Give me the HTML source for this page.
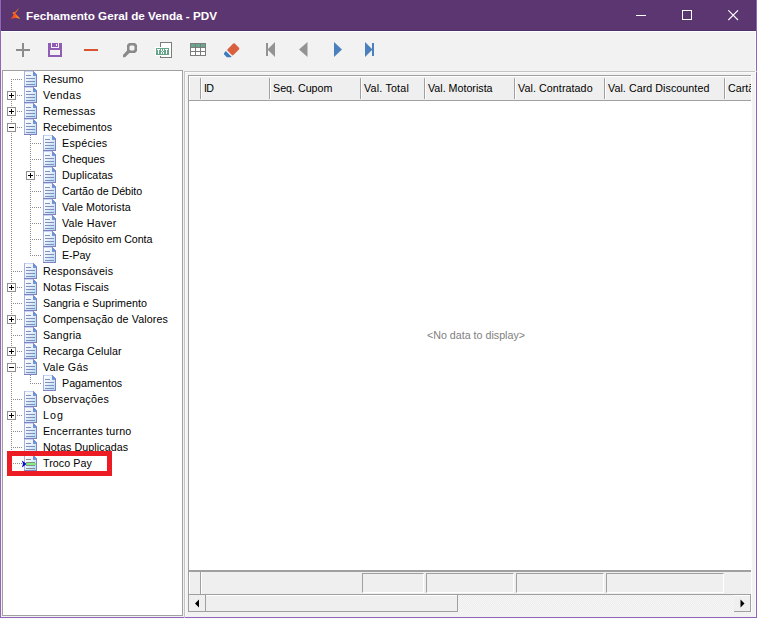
<!DOCTYPE html>
<html><head><meta charset="utf-8">
<style>
html,body{margin:0;padding:0;}
body{width:757px;height:619px;overflow:hidden;position:relative;background:#f2f2f2;font-family:"Liberation Sans",sans-serif;}
.a{position:absolute;}
.t{position:absolute;font-size:10.7px;line-height:16px;color:#000;white-space:nowrap;}
.tree{position:absolute;left:3px;top:71px;}
.h{position:absolute;top:77px;font-size:10.7px;line-height:23px;color:#000;white-space:nowrap;}
.sep{position:absolute;top:78px;width:1px;height:21px;background:#a0a0a0;border-right:1px solid #fff;}
</style></head><body>
<!-- window frame -->
<div class="a" style="left:0;top:0;width:757px;height:31px;background:#5c3671;"></div>
<div class="a" style="left:1px;top:30px;width:755px;height:1px;background:#52306a;"></div>
<div class="a" style="left:755px;top:0;width:1px;height:31px;background:#56336e;"></div>
<div class="a" style="left:1px;top:0;width:1px;height:31px;background:#56336e;"></div>
<div class="a" style="left:1px;top:31px;width:755px;height:1px;background:#ffffff;"></div>
<div class="a" style="left:0;top:0;width:1px;height:618px;background:#9264ba;"></div>
<div class="a" style="left:756px;top:0;width:1px;height:618px;background:#9264ba;"></div>
<div class="a" style="left:0;top:617px;width:757px;height:1px;background:#9264ba;"></div>
<div class="a" style="left:0;top:618px;width:757px;height:1px;background:#fafafa;"></div>

<!-- title -->
<svg class="a" style="left:0;top:0" width="24" height="24" viewBox="0 0 24 24">
 <defs><linearGradient id="ig" x1="11" y1="0" x2="20" y2="0" gradientUnits="userSpaceOnUse"><stop offset="0" stop-color="#ee3e26"/><stop offset="0.45" stop-color="#f25a22"/><stop offset="1" stop-color="#f9b51c"/></linearGradient></defs>
 <path d="M19 8L15.4 13.6L20.2 18.8L15.6 17.8L10.8 19L13.6 14.4L12.4 12.7L14.6 12.3Z" fill="url(#ig)"/>
 <path d="M12.4 12.7L14.6 12.3L14 13.8Z" fill="#f7b01e"/>
</svg>
<div class="a" style="left:26px;top:8px;font-size:11.7px;font-weight:bold;color:#fff;line-height:16px;white-space:nowrap;">Fechamento Geral de Venda - PDV</div>
<div class="a" style="left:636px;top:15px;width:10px;height:1px;background:#fff;"></div>
<div class="a" style="left:682px;top:10px;width:8px;height:8px;border:1px solid #fff;"></div>
<svg class="a" style="left:728px;top:10px" width="11" height="11" viewBox="0 0 11 11"><path d="M0.3 0.3L10 10M10 0.3L0.3 10" stroke="#fff" stroke-width="1.1"/></svg>

<!-- toolbar -->
<svg class="a" style="left:0;top:32px" width="400" height="36" viewBox="0 32 400 36" shape-rendering="crispEdges">
 <!-- plus -->
 <rect x="16" y="49" width="14" height="2" fill="#8c8c8c"/>
 <rect x="22" y="43" width="2" height="14" fill="#8c8c8c"/>
 <!-- save -->
 <path d="M48 43H62V57H48Z M51 43V48H59V43H58V47H52V43Z M50 50V55H60V50Z M56 44V46H57V44Z" fill="#8f5eb4" fill-rule="evenodd"/>
 <!-- minus -->
 <rect x="84" y="49" width="14" height="2" fill="#d9532e"/>
 <!-- magnifier -->
 <path d="M129 43H135L137 45V51L135 53H129L127 51V45Z M130.5 45.5H133.5L134.5 46.5V49.5L133.5 50.5H130.5L129.5 49.5V46.5Z" fill="#8a8a8a" fill-rule="evenodd" shape-rendering="auto"/>
 <path d="M127.5 50L130 52.5L125 57.2H123V55Z" fill="#8a8a8a" shape-rendering="auto"/>
 <!-- txt -->
 <rect x="160.5" y="42.5" width="11" height="15" fill="#fff" stroke="#7c7c7c"/>
 <rect x="155" y="47" width="15" height="9" fill="#fff"/>
 <rect x="156" y="48" width="13" height="7" fill="#66a58a"/>
 <g fill="#fff">
  <rect x="157" y="49" width="3" height="1"/><rect x="158" y="50" width="1" height="4"/>
  <rect x="161" y="49" width="1" height="2"/><rect x="163" y="49" width="1" height="2"/><rect x="162" y="51" width="1" height="1"/><rect x="161" y="52" width="1" height="2"/><rect x="163" y="52" width="1" height="2"/>
  <rect x="165" y="49" width="3" height="1"/><rect x="166" y="50" width="1" height="4"/>
 </g>
 <!-- grid -->
 <rect x="190" y="43" width="16" height="13" fill="#7c7c7c"/>
 <g fill="#68a88c"><rect x="191" y="44" width="4" height="3"/><rect x="196" y="44" width="4" height="3"/><rect x="201" y="44" width="4" height="3"/></g>
 <g fill="#fff"><rect x="191" y="48" width="4" height="3"/><rect x="196" y="48" width="4" height="3"/><rect x="201" y="48" width="4" height="3"/>
 <rect x="191" y="52" width="4" height="3"/><rect x="196" y="52" width="4" height="3"/><rect x="201" y="52" width="4" height="3"/></g>
 <!-- eraser -->
 <g shape-rendering="auto">
 <path d="M233.2 43.6Q234 42.8 234.8 43.6L239 47.8Q239.8 48.6 239 49.4L233.4 55Q232.6 55.8 231.8 55L227.6 50.8Q226.8 50 227.6 49.2Z" fill="#d95f3e"/>
 <path d="M225.8 51L231.6 56.8L231 57.2H226.8L224.2 54.6Q223.8 54 224 53.2Z" fill="#3d7bc0"/>
 </g>
 <!-- nav -->
 <g shape-rendering="auto">
 <rect x="266" y="43" width="2" height="13" fill="#939393"/>
 <path d="M267.5 49.5L275 42V57Z" fill="#939393"/>
 <path d="M299 49.5L307.5 42V57Z" fill="#939393"/>
 <path d="M342 49.5L334 42V57Z" fill="#4a80bd"/>
 <path d="M372.5 49.5L365 42V57Z" fill="#4a80bd"/>
 <rect x="372" y="43" width="2" height="13" fill="#4a80bd"/>
 </g>
</svg>

<!-- tree panel -->
<div class="a" style="left:2px;top:70px;width:179px;height:544px;border:1px solid #a0a0a0;background:#fff;"></div>
<svg class="tree" width="179" height="544" viewBox="3 71 179 544" shape-rendering="crispEdges"><defs>
<linearGradient id="dg" x1="0" y1="0" x2="1" y2="1"><stop offset="0" stop-color="#ffffff"/><stop offset="0.4" stop-color="#e8f4fc"/><stop offset="1" stop-color="#a6daf6"/></linearGradient>
<g id="docbase">
  <path d="M1 1H9V5H12V15H1Z" fill="url(#dg)"/>
  <rect x="0" y="0" width="1" height="16" fill="#a2b2e2"/>
  <rect x="1" y="0" width="8" height="1" fill="#c8d4f4"/>
  <rect x="9" y="0" width="1" height="5" fill="#8486c4"/>
  <rect x="9" y="4" width="4" height="1" fill="#8c96cc"/>
  <path d="M9 0L13 4V5H12L9 1Z" fill="#8a8cc8"/>
  <path d="M10 1.2L12 3.4V4H10Z" fill="#4aa0ee"/>
  <rect x="12" y="4" width="1" height="12" fill="#8080c0"/>
  <rect x="0" y="15" width="13" height="1" fill="#8080c0"/>
</g>
<symbol id="doc" viewBox="0 0 13 16">
  <use href="#docbase"/>
  <rect x="2" y="4" width="5" height="1" fill="#8a8abc"/>
  <rect x="2" y="7" width="9" height="1" fill="#8a8abc"/>
  <rect x="2" y="10" width="9" height="1" fill="#8a8abc"/>
  <rect x="2" y="13" width="9" height="1" fill="#8a8abc"/>
</symbol>
<symbol id="doc2" viewBox="0 0 13 16">
  <use href="#docbase"/>
  <rect x="2" y="4" width="5" height="1" fill="#8c8c8c"/>
  <rect x="2" y="7" width="9" height="1" fill="#8c8c8c"/>
  <rect x="2" y="8" width="10" height="2" fill="#7ef07e"/>
  <rect x="2" y="10" width="9" height="1" fill="#8c8c8c"/>
  <rect x="2" y="13" width="9" height="1" fill="#8c8c8c"/>
</symbol>
</defs><g fill="#8c8c8c"><rect x="11" y="79" width="1" height="1"/><rect x="13" y="79" width="1" height="1"/><rect x="15" y="79" width="1" height="1"/><rect x="17" y="79" width="1" height="1"/><rect x="19" y="79" width="1" height="1"/><rect x="21" y="79" width="1" height="1"/><rect x="17" y="95" width="1" height="1"/><rect x="19" y="95" width="1" height="1"/><rect x="21" y="95" width="1" height="1"/><rect x="17" y="111" width="1" height="1"/><rect x="19" y="111" width="1" height="1"/><rect x="21" y="111" width="1" height="1"/><rect x="17" y="127" width="1" height="1"/><rect x="19" y="127" width="1" height="1"/><rect x="21" y="127" width="1" height="1"/><rect x="30" y="143" width="1" height="1"/><rect x="32" y="143" width="1" height="1"/><rect x="34" y="143" width="1" height="1"/><rect x="36" y="143" width="1" height="1"/><rect x="38" y="143" width="1" height="1"/><rect x="40" y="143" width="1" height="1"/><rect x="30" y="159" width="1" height="1"/><rect x="32" y="159" width="1" height="1"/><rect x="34" y="159" width="1" height="1"/><rect x="36" y="159" width="1" height="1"/><rect x="38" y="159" width="1" height="1"/><rect x="40" y="159" width="1" height="1"/><rect x="36" y="175" width="1" height="1"/><rect x="38" y="175" width="1" height="1"/><rect x="40" y="175" width="1" height="1"/><rect x="30" y="191" width="1" height="1"/><rect x="32" y="191" width="1" height="1"/><rect x="34" y="191" width="1" height="1"/><rect x="36" y="191" width="1" height="1"/><rect x="38" y="191" width="1" height="1"/><rect x="40" y="191" width="1" height="1"/><rect x="30" y="207" width="1" height="1"/><rect x="32" y="207" width="1" height="1"/><rect x="34" y="207" width="1" height="1"/><rect x="36" y="207" width="1" height="1"/><rect x="38" y="207" width="1" height="1"/><rect x="40" y="207" width="1" height="1"/><rect x="30" y="223" width="1" height="1"/><rect x="32" y="223" width="1" height="1"/><rect x="34" y="223" width="1" height="1"/><rect x="36" y="223" width="1" height="1"/><rect x="38" y="223" width="1" height="1"/><rect x="40" y="223" width="1" height="1"/><rect x="30" y="239" width="1" height="1"/><rect x="32" y="239" width="1" height="1"/><rect x="34" y="239" width="1" height="1"/><rect x="36" y="239" width="1" height="1"/><rect x="38" y="239" width="1" height="1"/><rect x="40" y="239" width="1" height="1"/><rect x="30" y="255" width="1" height="1"/><rect x="32" y="255" width="1" height="1"/><rect x="34" y="255" width="1" height="1"/><rect x="36" y="255" width="1" height="1"/><rect x="38" y="255" width="1" height="1"/><rect x="40" y="255" width="1" height="1"/><rect x="11" y="271" width="1" height="1"/><rect x="13" y="271" width="1" height="1"/><rect x="15" y="271" width="1" height="1"/><rect x="17" y="271" width="1" height="1"/><rect x="19" y="271" width="1" height="1"/><rect x="21" y="271" width="1" height="1"/><rect x="17" y="287" width="1" height="1"/><rect x="19" y="287" width="1" height="1"/><rect x="21" y="287" width="1" height="1"/><rect x="11" y="303" width="1" height="1"/><rect x="13" y="303" width="1" height="1"/><rect x="15" y="303" width="1" height="1"/><rect x="17" y="303" width="1" height="1"/><rect x="19" y="303" width="1" height="1"/><rect x="21" y="303" width="1" height="1"/><rect x="17" y="319" width="1" height="1"/><rect x="19" y="319" width="1" height="1"/><rect x="21" y="319" width="1" height="1"/><rect x="11" y="335" width="1" height="1"/><rect x="13" y="335" width="1" height="1"/><rect x="15" y="335" width="1" height="1"/><rect x="17" y="335" width="1" height="1"/><rect x="19" y="335" width="1" height="1"/><rect x="21" y="335" width="1" height="1"/><rect x="17" y="351" width="1" height="1"/><rect x="19" y="351" width="1" height="1"/><rect x="21" y="351" width="1" height="1"/><rect x="17" y="367" width="1" height="1"/><rect x="19" y="367" width="1" height="1"/><rect x="21" y="367" width="1" height="1"/><rect x="30" y="383" width="1" height="1"/><rect x="32" y="383" width="1" height="1"/><rect x="34" y="383" width="1" height="1"/><rect x="36" y="383" width="1" height="1"/><rect x="38" y="383" width="1" height="1"/><rect x="40" y="383" width="1" height="1"/><rect x="11" y="399" width="1" height="1"/><rect x="13" y="399" width="1" height="1"/><rect x="15" y="399" width="1" height="1"/><rect x="17" y="399" width="1" height="1"/><rect x="19" y="399" width="1" height="1"/><rect x="21" y="399" width="1" height="1"/><rect x="17" y="415" width="1" height="1"/><rect x="19" y="415" width="1" height="1"/><rect x="21" y="415" width="1" height="1"/><rect x="11" y="431" width="1" height="1"/><rect x="13" y="431" width="1" height="1"/><rect x="15" y="431" width="1" height="1"/><rect x="17" y="431" width="1" height="1"/><rect x="19" y="431" width="1" height="1"/><rect x="21" y="431" width="1" height="1"/><rect x="11" y="447" width="1" height="1"/><rect x="13" y="447" width="1" height="1"/><rect x="15" y="447" width="1" height="1"/><rect x="17" y="447" width="1" height="1"/><rect x="19" y="447" width="1" height="1"/><rect x="21" y="447" width="1" height="1"/><rect x="11" y="463" width="1" height="1"/><rect x="13" y="463" width="1" height="1"/><rect x="15" y="463" width="1" height="1"/><rect x="17" y="463" width="1" height="1"/><rect x="19" y="463" width="1" height="1"/><rect x="21" y="463" width="1" height="1"/><rect x="11" y="79" width="1" height="1"/><rect x="11" y="81" width="1" height="1"/><rect x="11" y="83" width="1" height="1"/><rect x="11" y="85" width="1" height="1"/><rect x="11" y="87" width="1" height="1"/><rect x="11" y="89" width="1" height="1"/><rect x="11" y="101" width="1" height="1"/><rect x="11" y="103" width="1" height="1"/><rect x="11" y="105" width="1" height="1"/><rect x="11" y="117" width="1" height="1"/><rect x="11" y="119" width="1" height="1"/><rect x="11" y="121" width="1" height="1"/><rect x="11" y="133" width="1" height="1"/><rect x="11" y="135" width="1" height="1"/><rect x="11" y="137" width="1" height="1"/><rect x="11" y="139" width="1" height="1"/><rect x="11" y="141" width="1" height="1"/><rect x="11" y="143" width="1" height="1"/><rect x="11" y="145" width="1" height="1"/><rect x="11" y="147" width="1" height="1"/><rect x="11" y="149" width="1" height="1"/><rect x="11" y="151" width="1" height="1"/><rect x="11" y="153" width="1" height="1"/><rect x="11" y="155" width="1" height="1"/><rect x="11" y="157" width="1" height="1"/><rect x="11" y="159" width="1" height="1"/><rect x="11" y="161" width="1" height="1"/><rect x="11" y="163" width="1" height="1"/><rect x="11" y="165" width="1" height="1"/><rect x="11" y="167" width="1" height="1"/><rect x="11" y="169" width="1" height="1"/><rect x="11" y="171" width="1" height="1"/><rect x="11" y="173" width="1" height="1"/><rect x="11" y="175" width="1" height="1"/><rect x="11" y="177" width="1" height="1"/><rect x="11" y="179" width="1" height="1"/><rect x="11" y="181" width="1" height="1"/><rect x="11" y="183" width="1" height="1"/><rect x="11" y="185" width="1" height="1"/><rect x="11" y="187" width="1" height="1"/><rect x="11" y="189" width="1" height="1"/><rect x="11" y="191" width="1" height="1"/><rect x="11" y="193" width="1" height="1"/><rect x="11" y="195" width="1" height="1"/><rect x="11" y="197" width="1" height="1"/><rect x="11" y="199" width="1" height="1"/><rect x="11" y="201" width="1" height="1"/><rect x="11" y="203" width="1" height="1"/><rect x="11" y="205" width="1" height="1"/><rect x="11" y="207" width="1" height="1"/><rect x="11" y="209" width="1" height="1"/><rect x="11" y="211" width="1" height="1"/><rect x="11" y="213" width="1" height="1"/><rect x="11" y="215" width="1" height="1"/><rect x="11" y="217" width="1" height="1"/><rect x="11" y="219" width="1" height="1"/><rect x="11" y="221" width="1" height="1"/><rect x="11" y="223" width="1" height="1"/><rect x="11" y="225" width="1" height="1"/><rect x="11" y="227" width="1" height="1"/><rect x="11" y="229" width="1" height="1"/><rect x="11" y="231" width="1" height="1"/><rect x="11" y="233" width="1" height="1"/><rect x="11" y="235" width="1" height="1"/><rect x="11" y="237" width="1" height="1"/><rect x="11" y="239" width="1" height="1"/><rect x="11" y="241" width="1" height="1"/><rect x="11" y="243" width="1" height="1"/><rect x="11" y="245" width="1" height="1"/><rect x="11" y="247" width="1" height="1"/><rect x="11" y="249" width="1" height="1"/><rect x="11" y="251" width="1" height="1"/><rect x="11" y="253" width="1" height="1"/><rect x="11" y="255" width="1" height="1"/><rect x="11" y="257" width="1" height="1"/><rect x="11" y="259" width="1" height="1"/><rect x="11" y="261" width="1" height="1"/><rect x="11" y="263" width="1" height="1"/><rect x="11" y="265" width="1" height="1"/><rect x="11" y="267" width="1" height="1"/><rect x="11" y="269" width="1" height="1"/><rect x="11" y="271" width="1" height="1"/><rect x="11" y="273" width="1" height="1"/><rect x="11" y="275" width="1" height="1"/><rect x="11" y="277" width="1" height="1"/><rect x="11" y="279" width="1" height="1"/><rect x="11" y="281" width="1" height="1"/><rect x="11" y="293" width="1" height="1"/><rect x="11" y="295" width="1" height="1"/><rect x="11" y="297" width="1" height="1"/><rect x="11" y="299" width="1" height="1"/><rect x="11" y="301" width="1" height="1"/><rect x="11" y="303" width="1" height="1"/><rect x="11" y="305" width="1" height="1"/><rect x="11" y="307" width="1" height="1"/><rect x="11" y="309" width="1" height="1"/><rect x="11" y="311" width="1" height="1"/><rect x="11" y="313" width="1" height="1"/><rect x="11" y="325" width="1" height="1"/><rect x="11" y="327" width="1" height="1"/><rect x="11" y="329" width="1" height="1"/><rect x="11" y="331" width="1" height="1"/><rect x="11" y="333" width="1" height="1"/><rect x="11" y="335" width="1" height="1"/><rect x="11" y="337" width="1" height="1"/><rect x="11" y="339" width="1" height="1"/><rect x="11" y="341" width="1" height="1"/><rect x="11" y="343" width="1" height="1"/><rect x="11" y="345" width="1" height="1"/><rect x="11" y="357" width="1" height="1"/><rect x="11" y="359" width="1" height="1"/><rect x="11" y="361" width="1" height="1"/><rect x="11" y="373" width="1" height="1"/><rect x="11" y="375" width="1" height="1"/><rect x="11" y="377" width="1" height="1"/><rect x="11" y="379" width="1" height="1"/><rect x="11" y="381" width="1" height="1"/><rect x="11" y="383" width="1" height="1"/><rect x="11" y="385" width="1" height="1"/><rect x="11" y="387" width="1" height="1"/><rect x="11" y="389" width="1" height="1"/><rect x="11" y="391" width="1" height="1"/><rect x="11" y="393" width="1" height="1"/><rect x="11" y="395" width="1" height="1"/><rect x="11" y="397" width="1" height="1"/><rect x="11" y="399" width="1" height="1"/><rect x="11" y="401" width="1" height="1"/><rect x="11" y="403" width="1" height="1"/><rect x="11" y="405" width="1" height="1"/><rect x="11" y="407" width="1" height="1"/><rect x="11" y="409" width="1" height="1"/><rect x="11" y="421" width="1" height="1"/><rect x="11" y="423" width="1" height="1"/><rect x="11" y="425" width="1" height="1"/><rect x="11" y="427" width="1" height="1"/><rect x="11" y="429" width="1" height="1"/><rect x="11" y="431" width="1" height="1"/><rect x="11" y="433" width="1" height="1"/><rect x="11" y="435" width="1" height="1"/><rect x="11" y="437" width="1" height="1"/><rect x="11" y="439" width="1" height="1"/><rect x="11" y="441" width="1" height="1"/><rect x="11" y="443" width="1" height="1"/><rect x="11" y="445" width="1" height="1"/><rect x="11" y="447" width="1" height="1"/><rect x="11" y="449" width="1" height="1"/><rect x="11" y="451" width="1" height="1"/><rect x="11" y="453" width="1" height="1"/><rect x="11" y="455" width="1" height="1"/><rect x="11" y="457" width="1" height="1"/><rect x="11" y="459" width="1" height="1"/><rect x="11" y="461" width="1" height="1"/><rect x="11" y="463" width="1" height="1"/><rect x="30" y="135" width="1" height="1"/><rect x="30" y="137" width="1" height="1"/><rect x="30" y="139" width="1" height="1"/><rect x="30" y="141" width="1" height="1"/><rect x="30" y="143" width="1" height="1"/><rect x="30" y="145" width="1" height="1"/><rect x="30" y="147" width="1" height="1"/><rect x="30" y="149" width="1" height="1"/><rect x="30" y="151" width="1" height="1"/><rect x="30" y="153" width="1" height="1"/><rect x="30" y="155" width="1" height="1"/><rect x="30" y="157" width="1" height="1"/><rect x="30" y="159" width="1" height="1"/><rect x="30" y="161" width="1" height="1"/><rect x="30" y="163" width="1" height="1"/><rect x="30" y="165" width="1" height="1"/><rect x="30" y="167" width="1" height="1"/><rect x="30" y="169" width="1" height="1"/><rect x="30" y="181" width="1" height="1"/><rect x="30" y="183" width="1" height="1"/><rect x="30" y="185" width="1" height="1"/><rect x="30" y="187" width="1" height="1"/><rect x="30" y="189" width="1" height="1"/><rect x="30" y="191" width="1" height="1"/><rect x="30" y="193" width="1" height="1"/><rect x="30" y="195" width="1" height="1"/><rect x="30" y="197" width="1" height="1"/><rect x="30" y="199" width="1" height="1"/><rect x="30" y="201" width="1" height="1"/><rect x="30" y="203" width="1" height="1"/><rect x="30" y="205" width="1" height="1"/><rect x="30" y="207" width="1" height="1"/><rect x="30" y="209" width="1" height="1"/><rect x="30" y="211" width="1" height="1"/><rect x="30" y="213" width="1" height="1"/><rect x="30" y="215" width="1" height="1"/><rect x="30" y="217" width="1" height="1"/><rect x="30" y="219" width="1" height="1"/><rect x="30" y="221" width="1" height="1"/><rect x="30" y="223" width="1" height="1"/><rect x="30" y="225" width="1" height="1"/><rect x="30" y="227" width="1" height="1"/><rect x="30" y="229" width="1" height="1"/><rect x="30" y="231" width="1" height="1"/><rect x="30" y="233" width="1" height="1"/><rect x="30" y="235" width="1" height="1"/><rect x="30" y="237" width="1" height="1"/><rect x="30" y="239" width="1" height="1"/><rect x="30" y="241" width="1" height="1"/><rect x="30" y="243" width="1" height="1"/><rect x="30" y="245" width="1" height="1"/><rect x="30" y="247" width="1" height="1"/><rect x="30" y="249" width="1" height="1"/><rect x="30" y="251" width="1" height="1"/><rect x="30" y="253" width="1" height="1"/><rect x="30" y="255" width="1" height="1"/><rect x="30" y="375" width="1" height="1"/><rect x="30" y="377" width="1" height="1"/><rect x="30" y="379" width="1" height="1"/><rect x="30" y="381" width="1" height="1"/><rect x="30" y="383" width="1" height="1"/></g><rect x="7.5" y="91.5" width="8" height="8" fill="#fff" stroke="#8f8f8f" stroke-width="1"/><rect x="9" y="95" width="5" height="1" fill="#000"/><rect x="11" y="93" width="1" height="5" fill="#000"/><rect x="7.5" y="107.5" width="8" height="8" fill="#fff" stroke="#8f8f8f" stroke-width="1"/><rect x="9" y="111" width="5" height="1" fill="#000"/><rect x="11" y="109" width="1" height="5" fill="#000"/><rect x="7.5" y="123.5" width="8" height="8" fill="#fff" stroke="#8f8f8f" stroke-width="1"/><rect x="9" y="127" width="5" height="1" fill="#000"/><rect x="26.5" y="171.5" width="8" height="8" fill="#fff" stroke="#8f8f8f" stroke-width="1"/><rect x="28" y="175" width="5" height="1" fill="#000"/><rect x="30" y="173" width="1" height="5" fill="#000"/><rect x="7.5" y="283.5" width="8" height="8" fill="#fff" stroke="#8f8f8f" stroke-width="1"/><rect x="9" y="287" width="5" height="1" fill="#000"/><rect x="11" y="285" width="1" height="5" fill="#000"/><rect x="7.5" y="315.5" width="8" height="8" fill="#fff" stroke="#8f8f8f" stroke-width="1"/><rect x="9" y="319" width="5" height="1" fill="#000"/><rect x="11" y="317" width="1" height="5" fill="#000"/><rect x="7.5" y="347.5" width="8" height="8" fill="#fff" stroke="#8f8f8f" stroke-width="1"/><rect x="9" y="351" width="5" height="1" fill="#000"/><rect x="11" y="349" width="1" height="5" fill="#000"/><rect x="7.5" y="363.5" width="8" height="8" fill="#fff" stroke="#8f8f8f" stroke-width="1"/><rect x="9" y="367" width="5" height="1" fill="#000"/><rect x="7.5" y="411.5" width="8" height="8" fill="#fff" stroke="#8f8f8f" stroke-width="1"/><rect x="9" y="415" width="5" height="1" fill="#000"/><rect x="11" y="413" width="1" height="5" fill="#000"/><use href="#doc" x="24" y="71" width="13" height="16"/><use href="#doc" x="24" y="87" width="13" height="16"/><use href="#doc" x="24" y="103" width="13" height="16"/><use href="#doc" x="24" y="119" width="13" height="16"/><use href="#doc" x="43" y="135" width="13" height="16"/><use href="#doc" x="43" y="151" width="13" height="16"/><use href="#doc" x="43" y="167" width="13" height="16"/><use href="#doc" x="43" y="183" width="13" height="16"/><use href="#doc" x="43" y="199" width="13" height="16"/><use href="#doc" x="43" y="215" width="13" height="16"/><use href="#doc" x="43" y="231" width="13" height="16"/><use href="#doc" x="43" y="247" width="13" height="16"/><use href="#doc" x="24" y="263" width="13" height="16"/><use href="#doc" x="24" y="279" width="13" height="16"/><use href="#doc" x="24" y="295" width="13" height="16"/><use href="#doc" x="24" y="311" width="13" height="16"/><use href="#doc" x="24" y="327" width="13" height="16"/><use href="#doc" x="24" y="343" width="13" height="16"/><use href="#doc" x="24" y="359" width="13" height="16"/><use href="#doc" x="43" y="375" width="13" height="16"/><use href="#doc" x="24" y="391" width="13" height="16"/><use href="#doc" x="24" y="407" width="13" height="16"/><use href="#doc" x="24" y="423" width="13" height="16"/><use href="#doc" x="24" y="439" width="13" height="16"/><use href="#doc2" x="24" y="455" width="13" height="16"/><path d="M21.8 460.6L24 462L26.6 464L24 466L21.8 467.4L23 464Z" fill="#0a0ac8" shape-rendering="auto"/></svg>
<div class="t" style="left:43px;top:71px;letter-spacing:0.12px">Resumo</div><div class="t" style="left:43px;top:87px;letter-spacing:0.48px">Vendas</div><div class="t" style="left:43px;top:103px;letter-spacing:0.26px">Remessas</div><div class="t" style="left:43px;top:119px;letter-spacing:0.07px">Recebimentos</div><div class="t" style="left:62px;top:135px;letter-spacing:0.26px">Espécies</div><div class="t" style="left:62px;top:151px;letter-spacing:0.0px">Cheques</div><div class="t" style="left:62px;top:167px;letter-spacing:0.11px">Duplicatas</div><div class="t" style="left:62px;top:183px;letter-spacing:-0.04px">Cartão de Débito</div><div class="t" style="left:62px;top:199px;letter-spacing:0.09px">Vale Motorista</div><div class="t" style="left:62px;top:215px;letter-spacing:0.24px">Vale Haver</div><div class="t" style="left:62px;top:231px;letter-spacing:-0.07px">Depósito em Conta</div><div class="t" style="left:62px;top:247px;letter-spacing:-0.1px">E-Pay</div><div class="t" style="left:43px;top:263px;letter-spacing:0.27px">Responsáveis</div><div class="t" style="left:43px;top:279px;letter-spacing:0.15px">Notas Fiscais</div><div class="t" style="left:43px;top:295px;letter-spacing:0.03px">Sangria e Suprimento</div><div class="t" style="left:43px;top:311px;letter-spacing:0.13px">Compensação de Valores</div><div class="t" style="left:43px;top:327px;letter-spacing:0.23px">Sangria</div><div class="t" style="left:43px;top:343px;letter-spacing:0.09px">Recarga Celular</div><div class="t" style="left:43px;top:359px;letter-spacing:0.26px">Vale Gás</div><div class="t" style="left:62px;top:375px;letter-spacing:0.02px">Pagamentos</div><div class="t" style="left:43px;top:391px;letter-spacing:0.28px">Observações</div><div class="t" style="left:43px;top:407px;letter-spacing:1.0px">Log</div><div class="t" style="left:43px;top:423px;letter-spacing:0.21px">Encerrantes turno</div><div class="t" style="left:43px;top:439px;letter-spacing:0.09px">Notas Duplicadas</div><div class="t" style="left:43px;top:455px;letter-spacing:0.07px">Troco Pay</div>
<!-- red highlight -->
<div class="a" style="left:7px;top:451px;width:95px;height:15px;border:5px solid #ed1c24;"></div>

<!-- grid panel -->
<div class="a" style="left:184px;top:71px;width:572px;height:546px;border-left:1px solid #c4c4c4;border-top:1px solid #c4c4c4;"></div>
<div class="a" style="left:185px;top:72px;width:571px;height:1px;background:#fafafa;"></div>
<div class="a" style="left:185px;top:72px;width:1px;height:545px;background:#fafafa;"></div>
<!-- grid dark border -->
<div class="a" style="left:188px;top:75px;width:563px;height:1px;background:#a0a0a0;"></div>
<div class="a" style="left:188px;top:75px;width:1px;height:537px;background:#a0a0a0;"></div>
<div class="a" style="left:189px;top:76px;width:562px;height:1px;background:#fff;"></div>
<div class="a" style="left:189px;top:76px;width:1px;height:535px;background:#fff;"></div>
<!-- header -->
<div class="a" style="left:190px;top:77px;width:561px;height:23px;background:#efefef;"></div>
<div class="a" style="left:189px;top:100px;width:562px;height:1px;background:#a0a0a0;"></div>
<div class="sep" style="left:200px"></div>
<div class="sep" style="left:269px"></div>
<div class="sep" style="left:360px"></div>
<div class="sep" style="left:424px"></div>
<div class="sep" style="left:514px"></div>
<div class="sep" style="left:604px"></div>
<div class="sep" style="left:724px"></div>
<div class="a" style="left:189px;top:77px;width:562px;height:23px;overflow:hidden;">
<div class="h" style="top:0;left:15px;letter-spacing:-0.6px">ID</div>
<div class="h" style="top:0;left:84px">Seq. Cupom</div>
<div class="h" style="top:0;left:175px;letter-spacing:0.2px">Val. Total</div>
<div class="h" style="top:0;left:239px">Val. Motorista</div>
<div class="h" style="top:0;left:329px;letter-spacing:0.08px">Val. Contratado</div>
<div class="h" style="top:0;left:419px;letter-spacing:0.06px">Val. Card Discounted</div>
<div class="h" style="top:0;left:539px">Cartão</div>
</div>
<!-- data area -->
<div class="a" style="left:190px;top:101px;width:561px;height:469px;background:#fff;"></div>
<div class="a" style="left:189px;top:325px;width:574px;text-align:center;font-size:10.7px;line-height:20px;color:#808080;">&lt;No data to display&gt;</div>
<!-- footer -->
<div class="a" style="left:189px;top:570px;width:562px;height:2px;background:#a0a0a0;"></div>
<div class="a" style="left:190px;top:572px;width:561px;height:22px;background:#efefef;"></div>
<div class="a" style="left:189px;top:572px;width:1px;height:22px;background:#fff;"></div>
<div class="a" style="left:200px;top:572px;width:1px;height:22px;background:#a0a0a0;border-right:1px solid #fff;"></div>
<div class="a" style="left:189px;top:594px;width:562px;height:1px;background:#a0a0a0;"></div>
<div class="a" style="left:362px;top:573px;width:60px;height:18px;border-left:1px solid #a0a0a0;border-top:1px solid #a0a0a0;border-right:1px solid #fff;border-bottom:1px solid #fff;"></div>
<div class="a" style="left:426px;top:573px;width:86px;height:18px;border-left:1px solid #a0a0a0;border-top:1px solid #a0a0a0;border-right:1px solid #fff;border-bottom:1px solid #fff;"></div>
<div class="a" style="left:516px;top:573px;width:86px;height:18px;border-left:1px solid #a0a0a0;border-top:1px solid #a0a0a0;border-right:1px solid #fff;border-bottom:1px solid #fff;"></div>
<div class="a" style="left:606px;top:573px;width:116px;height:18px;border-left:1px solid #a0a0a0;border-top:1px solid #a0a0a0;border-right:1px solid #fff;border-bottom:1px solid #fff;"></div>

<!-- scrollbar -->
<div class="a" style="left:205px;top:595px;width:546px;height:16px;background-color:#f7f7f7;background-image:linear-gradient(45deg,#ececec 25%,transparent 25%,transparent 75%,#ececec 75%),linear-gradient(45deg,#ececec 25%,transparent 25%,transparent 75%,#ececec 75%);background-size:2px 2px;background-position:0 0,1px 1px;"></div>
<div class="a" style="left:189px;top:595px;width:16px;height:16px;background:#efefef;"></div>
<div class="a" style="left:205px;top:595px;width:1px;height:16px;background:#a0a0a0;"></div>
<div class="a" style="left:206px;top:595px;width:251px;height:16px;background:#efefef;border-top:1px solid #fff;box-sizing:border-box;"></div>
<div class="a" style="left:457px;top:595px;width:1px;height:17px;background:#a0a0a0;"></div>
<div class="a" style="left:188px;top:611px;width:270px;height:1px;background:#a0a0a0;"></div>
<svg class="a" style="left:194px;top:599px" width="6" height="9" viewBox="0 0 6 9"><path d="M5 0.5V8.5L1 4.5Z" fill="#000"/></svg>
<div class="a" style="left:734px;top:595px;width:16px;height:16px;background:#efefef;border-top:1px solid #fff;box-sizing:border-box;"></div>
<div class="a" style="left:750px;top:594px;width:1px;height:18px;background:#a0a0a0;"></div>
<div class="a" style="left:734px;top:611px;width:17px;height:1px;background:#a0a0a0;"></div>
<svg class="a" style="left:740px;top:599px" width="6" height="9" viewBox="0 0 6 9"><path d="M0.5 0.5V8.5L4.5 4.5Z" fill="#000"/></svg>
<div class="a" style="left:755px;top:32px;width:1px;height:585px;background:#fafafa;"></div>
<div class="a" style="left:751px;top:75px;width:1px;height:537px;background:#fcfcfc;"></div>
</body></html>
